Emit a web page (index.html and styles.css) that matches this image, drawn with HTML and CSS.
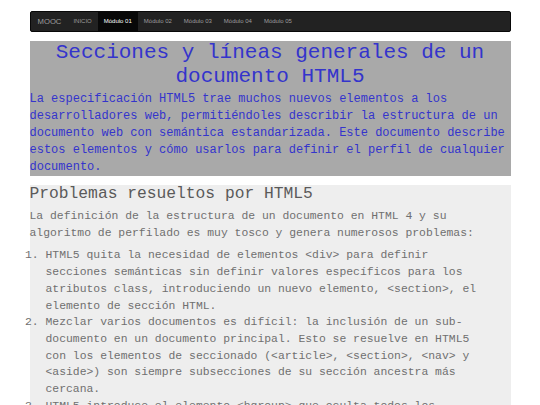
FILE: index.html
```html
<!DOCTYPE html>
<html lang="es">
<head>
<meta charset="utf-8">
<title>MOOC - Módulo 01</title>
<link rel="stylesheet" href="styles.css">
</head>
<body>
<div class="page">
  <nav class="navbar">
    <span class="brand">MOOC</span>
    <ul class="nav">
      <li class="nav-item">INICIO</li>
      <li class="nav-item active">Módulo 01</li>
      <li class="nav-item">Módulo 02</li>
      <li class="nav-item">Módulo 03</li>
      <li class="nav-item">Módulo 04</li>
      <li class="nav-item">Módulo 05</li>
    </ul>
  </nav>
  <header class="intro">
    <h1 class="intro-title">Secciones y líneas generales de un documento HTML5</h1>
    <p class="intro-text">La especificación HTML5 trae muchos nuevos elementos a los desarrolladores web, permitiéndoles describir la estructura de un documento web con semántica estandarizada. Este documento describe estos elementos y cómo usarlos para definir el perfil de cualquier documento.</p>
  </header>
  <section class="content">
    <h2 class="content-title">Problemas resueltos por HTML5</h2>
    <p class="content-text">La definición de la estructura de un documento en HTML 4 y su algoritmo de perfilado es muy tosco y genera numerosos problemas:</p>
    <ol class="content-list">
      <li>HTML5 quita la necesidad de elementos &lt;div&gt; para definir secciones semánticas sin definir valores específicos para los atributos class, introduciendo un nuevo elemento, &lt;section&gt;, el elemento de sección HTML.</li>
      <li>Mezclar varios documentos es difícil: la inclusión de un sub-documento en un documento principal. Esto se resuelve en HTML5 con los elementos de seccionado (&lt;article&gt;, &lt;section&gt;, &lt;nav&gt; y &lt;aside&gt;) son siempre subsecciones de su sección ancestra más cercana.</li>
      <li>HTML5 introduce el elemento &lt;hgroup&gt; que oculta todos los elementos de encabezado excepto el primero de nivel más alto.</li>
    </ol>
  </section>
</div>
</body>
</html>
```
FILE: styles.css
```css
html, body {
  margin: 0;
  padding: 0;
  background: #fff;
}

body {
  font-family: "Liberation Mono", "Courier New", monospace;
  font-size: 12px;
  line-height: 17px;
}

.page {
  width: 481px;
  margin: 0 auto;
  padding-top: 11px;
}

.navbar {
  display: flex;
  align-items: stretch;
  height: 21px;
  box-sizing: border-box;
  background: #222;
  border: 1px solid #080808;
  border-radius: 2px;
  font-family: "Liberation Sans", Arial, sans-serif;
  color: #9d9d9d;
}

.brand {
  padding: 0 6px 0 7px;
  font-size: 7.7px;
  line-height: 19px;
}

.nav {
  display: flex;
  margin: 0;
  padding: 0;
  list-style: none;
}

.nav-item {
  padding: 0 6px;
  font-size: 6px;
  line-height: 19px;
}

.nav-item.active {
  background: #080808;
  color: #fff;
}

.intro {
  margin-top: 9px;
  background: #a9a9a9;
  color: #3434cc;
}

.intro-title {
  margin: 0 0 2px;
  font-size: 21px;
  line-height: 24px;
  font-weight: normal;
  text-align: center;
}

.intro-text {
  margin: 0;
  font-size: 12px;
  line-height: 17px;
}

.content {
  margin-top: 9px;
  background: #eee;
  color: #707070;
  font-size: 11.4px;
  line-height: 16.7px;
  padding-bottom: 20px;
}

.content-title {
  margin: 0 0 5px;
  font-size: 16.3px;
  line-height: 18px;
  font-weight: normal;
  color: #5a5a5a;
}

.content-text {
  margin: 0;
}

.content-list {
  margin: 6px 0 0;
  padding: 0 20px 0 16px;
}
```
